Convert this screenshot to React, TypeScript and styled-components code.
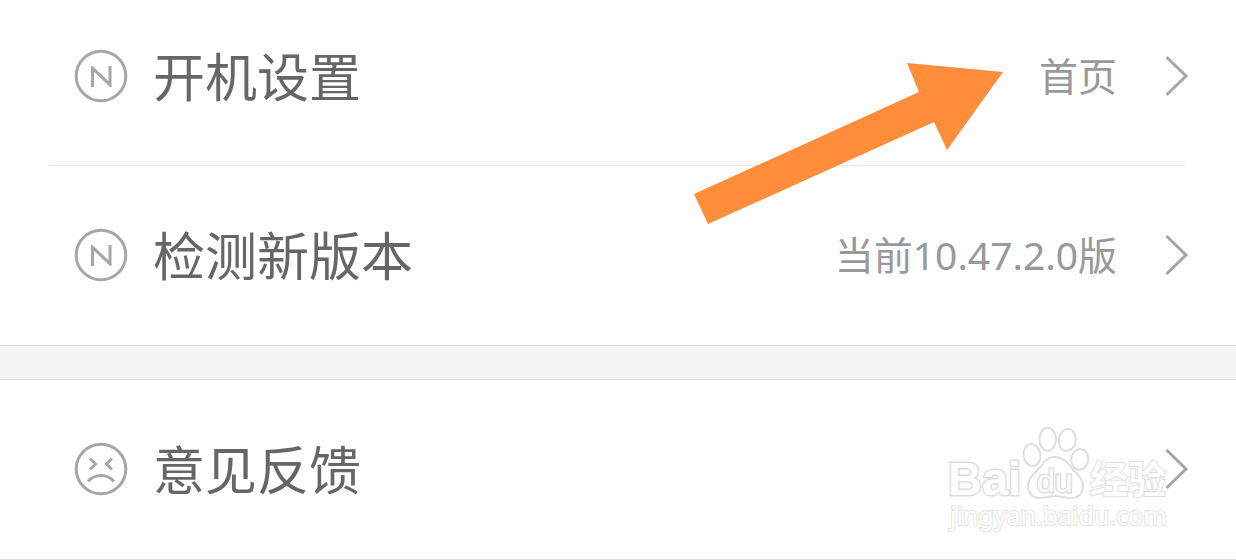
import React from "react";
import styled, { createGlobalStyle } from "styled-components";

const GlobalStyle = createGlobalStyle`
  *, *::before, *::after { box-sizing: border-box; }
  body {
    margin: 0;
    background: #fefefe;
    font-family: "Noto Sans CJK SC", sans-serif;
  }
`;

const Page = styled.main`
  position: relative;
  overflow: hidden;
`;

const Group = styled.section`
  padding: 0 51px 0 49px;
  border-bottom: 1px solid #dedede;
`;

const Divider = styled.div`
  height: 34px;
  background: #f5f5f5;
  border-bottom: 1px solid #dedede;
`;

const Row = styled.a<{ $first?: boolean; $line?: boolean }>`
  display: flex;
  align-items: center;
  padding: ${(p) => (p.$first ? 37 : 50)}px 0 50px 25px;
  border-bottom: 1px solid ${(p) => (p.$line ? "#e8e8e8" : "transparent")};
  text-decoration: none;
`;

const Label = styled.span`
  flex: 1;
  margin-left: 25px;
  padding-bottom: 2px;
  color: #666;
  font-size: 52px;
  line-height: 76px;
`;

const Value = styled.span`
  color: #999;
  font-family: "Noto Sans", "Noto Sans CJK SC", sans-serif;
  font-size: 39px;
  line-height: 78px;
`;

const IconSvg = styled.svg`
  flex: none;
  width: 54px;
  height: 54px;
  fill: none;
  stroke: #a6a6a6;
  stroke-width: 3;
`;

const ChevronSvg = styled.svg`
  flex: none;
  width: 24px;
  height: 42px;
  margin-left: 48px;
  margin-right: -4px;
  fill: none;
  stroke: #a6a6a6;
  stroke-width: 3;
`;

const Pointer = styled.svg`
  position: absolute;
  top: 60px;
  right: 232px;
  width: 312px;
  height: 168px;
  fill: #ff8d3a;
  pointer-events: none;
`;

const Watermark = styled.svg`
  position: absolute;
  right: 60px;
  bottom: 20px;
  width: 236px;
  height: 120px;
  fill: #fefefe;
  stroke: #dedede;
  stroke-width: 2;
  pointer-events: none;
`;

const Latin = styled.text`
  font: 700 47px "Liberation Sans", sans-serif;
  stroke-width: 3;
  paint-order: stroke;
`;

const Du = styled.text`
  font: 400 32px "Liberation Sans", sans-serif;
  stroke-width: 3;
  paint-order: stroke;
`;

const Chinese = styled.text`
  font: 700 38px "Noto Sans CJK SC", sans-serif;
  stroke-width: 2;
  paint-order: stroke;
`;

const Domain = styled.text`
  font: 400 25px "Noto Sans", sans-serif;
  stroke: #e4e4e4;
  stroke-width: 2;
  paint-order: stroke;
`;

const BadgeIcon = () => (
  <IconSvg viewBox="0 0 54 54" aria-hidden="true">
    <circle cx="27" cy="27" r="24.8" />
    <path
      d="M17 17H18.500L34.500 32.300V17H37.500V38H36L20 22.700V38H17Z"
      fill="#a6a6a6"
      stroke="none"
    />
  </IconSvg>
);

const SadIcon = () => (
  <IconSvg viewBox="0 0 54 54" aria-hidden="true">
    <circle cx="27" cy="27" r="24.8" />
    <path d="M16 16.500L21.500 22L16 27.500M38 16.500L32.500 22L38 27.500" />
    <path d="M14 39.500C21 31.500 33 31.500 40 39.500" />
  </IconSvg>
);

const Chevron = () => (
  <ChevronSvg viewBox="0 0 24 42" aria-hidden="true">
    <path d="M1.500 2L21 21L1.500 40" />
  </ChevronSvg>
);

export default function App() {
  return (
    <>
      <GlobalStyle />
      <Page>
        <Group>
          <Row href="#startup" $first $line>
            <BadgeIcon />
            <Label>开机设置</Label>
            <Value>首页</Value>
            <Chevron />
          </Row>
          <Row href="#version">
            <BadgeIcon />
            <Label>检测新版本</Label>
            <Value>当前10.47.2.0版</Value>
            <Chevron />
          </Row>
        </Group>
        <Divider />
        <Group>
          <Row href="#feedback">
            <SadIcon />
            <Label>意见反馈</Label>
            <Chevron />
          </Row>
        </Group>
        <Pointer viewBox="0 0 312 168" aria-hidden="true">
          <path d="M2 134L227 32L215 3L311 12L255 90L242 62L16 164Z" />
        </Pointer>
        <Watermark viewBox="0 0 236 120" role="img" aria-label="Baidu 经验">
          <Latin x="8" y="75">Bai</Latin>
          <ellipse cx="92" cy="35" rx="8.500" ry="11" transform="rotate(-8 92 35)" />
          <ellipse cx="107.700" cy="19.300" rx="8.300" ry="11.500" />
          <ellipse cx="127.300" cy="20" rx="8.500" ry="11" transform="rotate(8 127.300 20)" />
          <ellipse cx="139.700" cy="39.300" rx="8.500" ry="10.500" transform="rotate(8 139.700 39.300)" />
          <path d="M115 37C123 37 127 42 130 46C135 53 143 57 143 66C143 75 137 78.500 129 78C122 77.500 119 76 115 76C111 76 107 77.500 101 78C93 78.500 88 74 88 66C88 57 96 53 101 46C104 42 107 37 115 37Z" />
          <Du x="97" y="72">du</Du>
          <Chinese x="150" y="73">经验</Chinese>
          <Domain x="10" y="105">jingyan.baidu.com</Domain>
        </Watermark>
      </Page>
    </>
  );
}
